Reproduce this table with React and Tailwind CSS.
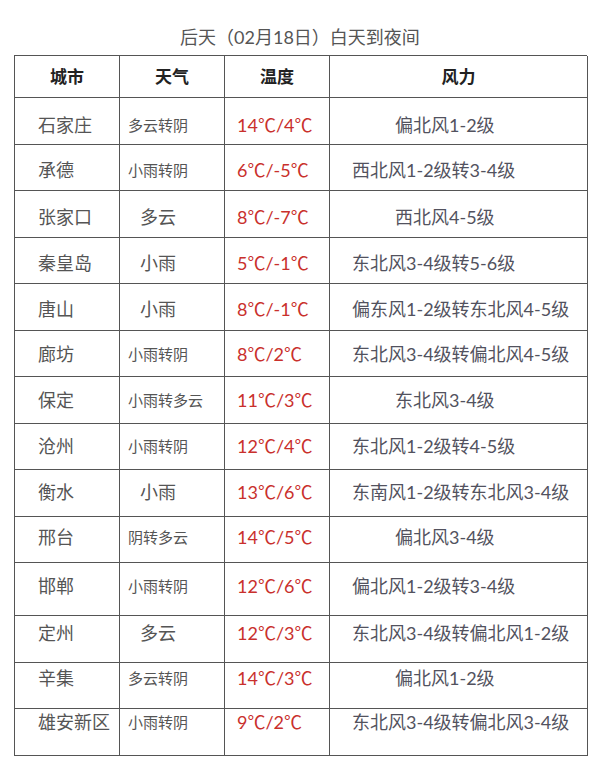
const rows = [
  { city: '石家庄', weather: '多云转阴', temp: '14℃/4℃', wind: '偏北风1-2级', short: true, box: 'h-[47px] pt-[15px]' },
  { city: '承德', weather: '小雨转阴', temp: '6℃/-5℃', wind: '西北风1-2级转3-4级', box: 'h-[46px] pt-[13px]' },
  { city: '张家口', weather: '多云', temp: '8℃/-7℃', wind: '西北风4-5级', short: true, box: 'h-[47px] pt-[14px]' },
  { city: '秦皇岛', weather: '小雨', temp: '5℃/-1℃', wind: '东北风3-4级转5-6级', box: 'h-[46px] pt-[13px]' },
  { city: '唐山', weather: '小雨', temp: '8℃/-1℃', wind: '偏东风1-2级转东北风4-5级', box: 'h-[47px] pt-[13px]' },
  { city: '廊坊', weather: '小雨转阴', temp: '8℃/2℃', wind: '东北风3-4级转偏北风4-5级', box: 'h-[46px] pt-[11px]' },
  { city: '保定', weather: '小雨转多云', temp: '11℃/3℃', wind: '东北风3-4级', short: true, box: 'h-[47px] pt-[11px]' },
  { city: '沧州', weather: '小雨转阴', temp: '12℃/4℃', wind: '东北风1-2级转4-5级', box: 'h-[46px] pt-[10px]' },
  { city: '衡水', weather: '小雨', temp: '13℃/6℃', wind: '东南风1-2级转东北风3-4级', box: 'h-[47px] pt-[10px]' },
  { city: '邢台', weather: '阴转多云', temp: '14℃/5℃', wind: '偏北风3-4级', short: true, box: 'h-[46px] pt-[8px]' },
  { city: '邯郸', weather: '小雨转阴', temp: '12℃/6℃', wind: '偏北风1-2级转3-4级', box: 'h-[53px] pt-[11px]' },
  { city: '定州', weather: '多云', temp: '12℃/3℃', wind: '东北风3-4级转偏北风1-2级', box: 'h-[47px] pt-[5px]' },
  { city: '辛集', weather: '多云转阴', temp: '14℃/3℃', wind: '偏北风1-2级', short: true, box: 'h-[46px] pt-[3px]' },
  { city: '雄安新区', weather: '小雨转阴', temp: '9℃/2℃', wind: '东北风3-4级转偏北风3-4级', box: 'h-[47px] pt-[1px]' },
]

const cols = 'grid grid-cols-[105px_105px_105px_258px]'
const cell = 'border-r border-b border-[#555]'

function Row({ row }) {
  const long = row.weather.length > 2

  return <div className={cols}>
    <div className={`${cell} ${row.box} pl-[23px] text-[18px] leading-[24px] text-[#555]`}>{row.city}</div>
    <div className={`${cell} ${row.box} ${long ? 'pl-[8px] text-[15px]' : 'pl-[20px] text-[18px]'} leading-[24px] text-[#555] whitespace-nowrap`}>
      {row.weather}
    </div>
    <div className={`${cell} ${row.box} pl-[12px] text-[18px] leading-[24px] text-[#c9302c]`}>{row.temp}</div>
    <div className={`${cell} ${row.box} ${row.short ? 'pl-[65px]' : 'pl-[22px]'} text-[18px] leading-[24px] text-[#52525e] whitespace-nowrap`}>
      {row.wind}
    </div>
  </div>
}

export default function App() {
  return <div className="w-[600px] h-[775px] bg-white font-['Lato','Noto_Sans_CJK_SC',sans-serif]">
    <h1 className="h-[55px] pt-[25px] text-center text-[18px] leading-[24px] text-[#555]">
      后天（02月18日）白天到夜间
    </h1>

    <div className="ml-[14px] w-[573px] border-t border-l border-[#555]">
      <div className={cols}>
        {['城市', '天气', '温度', '风力'].map(title =>
          <div key={title} className={`${cell} h-[42px] flex items-center justify-center text-[17px] font-bold text-[#222]`}>
            {title}
          </div>
        )}
      </div>

      {rows.map(row => <Row key={row.city} row={row} />)}
    </div>
  </div>
}
